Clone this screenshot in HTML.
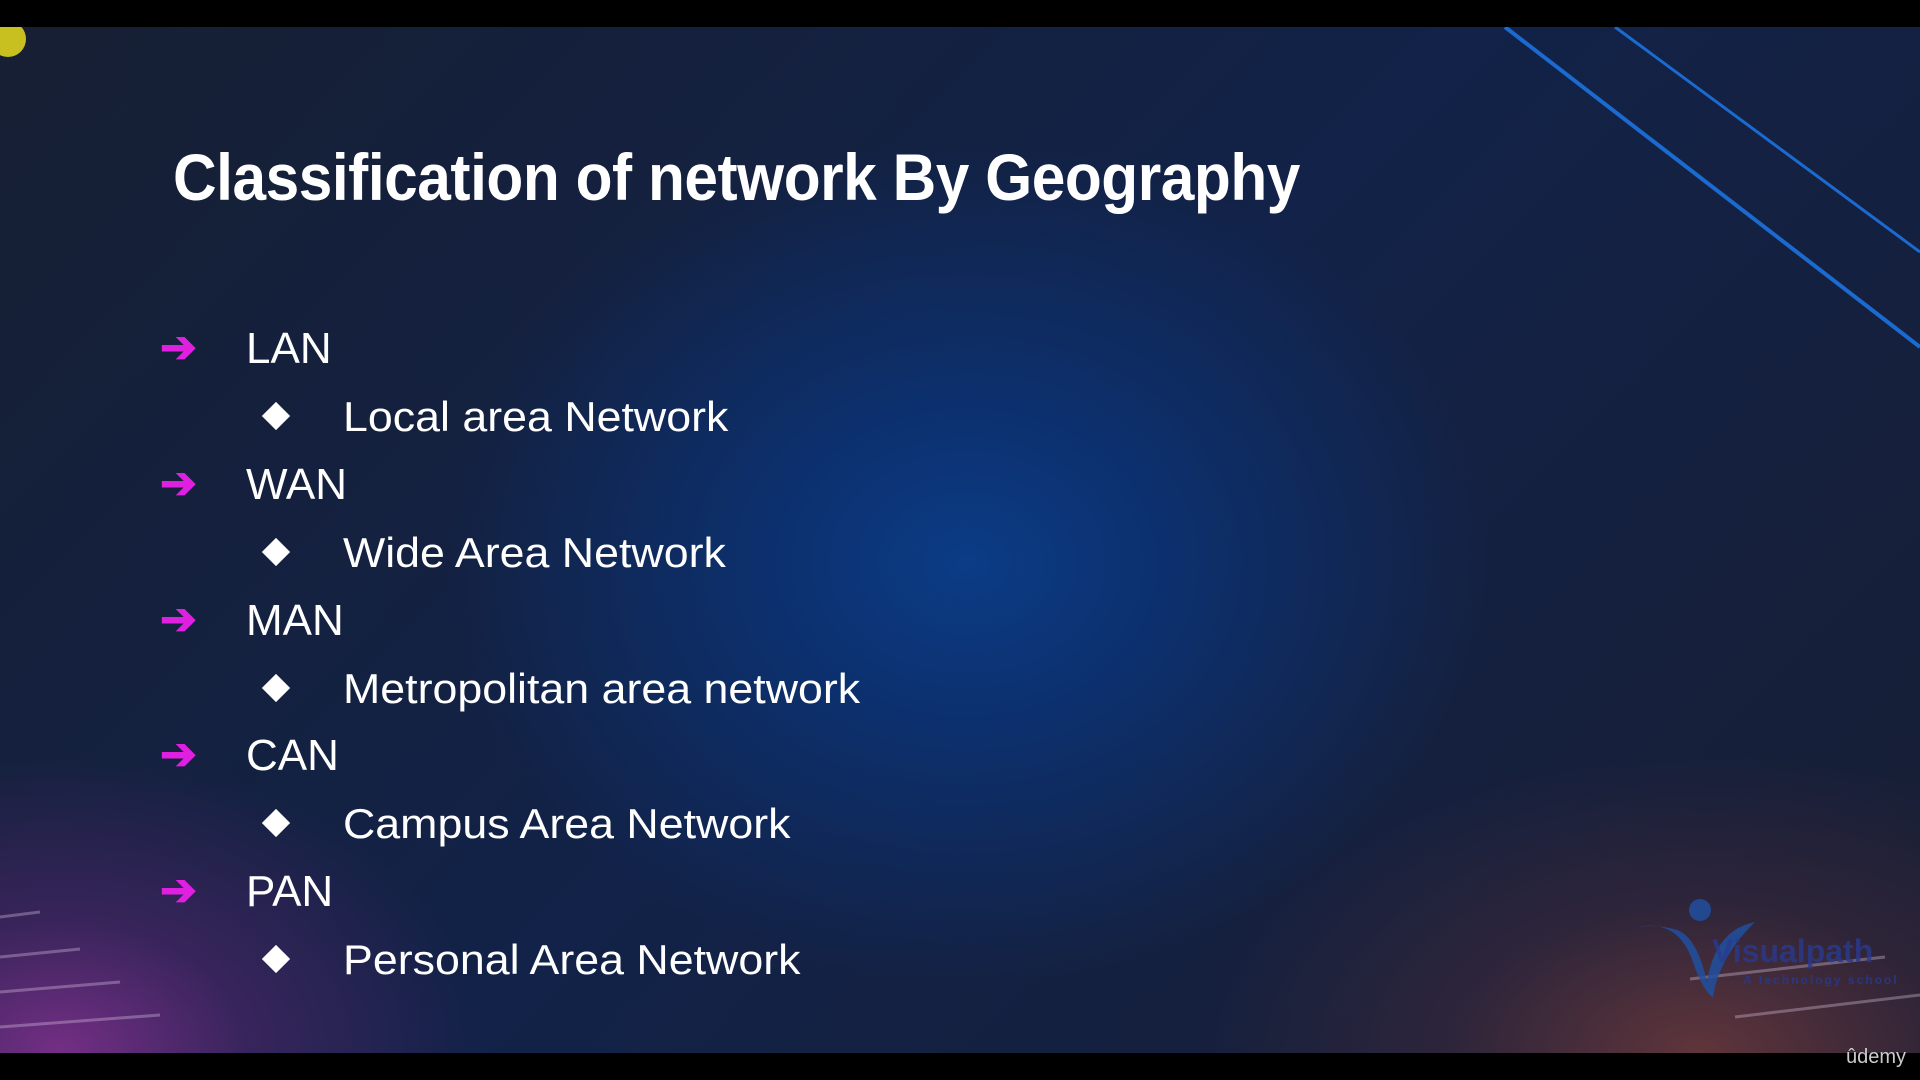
<!DOCTYPE html>
<html><head><meta charset="utf-8"><style>
html,body{margin:0;padding:0;width:1920px;height:1080px;overflow:hidden;background:#000;font-family:"Liberation Sans",sans-serif}
#s{position:absolute;left:0;top:27px;width:1920px;height:1026px;overflow:hidden;
background:
radial-gradient(ellipse 520px 420px at 967px 536px,#0b3c86 0%,#0c3170 35%,rgba(16,36,80,0) 100%),
radial-gradient(ellipse 420px 300px at 60px 1026px,rgba(140,50,150,.8) 0%,rgba(100,40,120,.45) 45%,rgba(40,30,80,0) 100%),
radial-gradient(ellipse 500px 300px at 1700px 1026px,rgba(120,60,60,.75) 0%,rgba(80,45,60,.4) 50%,rgba(30,30,60,0) 100%),
linear-gradient(135deg,#161f33 0%,#122248 50%,#181e33 100%);}
.t{position:absolute;left:173px;top:112px;font-size:66px;font-weight:bold;color:#fff;white-space:nowrap;transform-origin:0 0;transform:scaleX(.915);letter-spacing:-.5px}
.a{position:absolute;left:160px;color:#e020e0;font-size:44px;font-weight:bold;line-height:1}
.m{position:absolute;left:246px;color:#fff;font-size:44px;line-height:1}
.d{position:absolute;left:266px;width:20px;height:20px;background:#fff;transform:rotate(45deg)}
.s{position:absolute;left:343px;color:#fff;font-size:42px;line-height:1;white-space:nowrap;transform-origin:0 0;transform:scaleX(1.065)}
</style></head><body>
<div id="s">
<svg width="1920" height="1026" style="position:absolute;left:0;top:0">
<line x1="1505" y1="0" x2="1920" y2="320" stroke="#1a6ad0" stroke-width="4"/>
<line x1="1615" y1="0" x2="1920" y2="225" stroke="#1a6ad0" stroke-width="3"/>
<circle cx="8" cy="12" r="18" fill="#c8c020"/>
<g stroke="rgba(220,200,230,.35)" stroke-width="3">
<line x1="0" y1="890" x2="40" y2="885"/><line x1="0" y1="930" x2="80" y2="922"/>
<line x1="0" y1="965" x2="120" y2="955"/><line x1="0" y1="1000" x2="160" y2="988"/>
<line x1="1690" y1="952" x2="1885" y2="930"/><line x1="1735" y1="990" x2="1920" y2="968"/>
</g>
<path d="M1636 900 q40 -8 55 30 q12 35 22 40 q6 -40 42 -75 q-40 8 -48 60 q-10 -45 -30 -52 q-20 -6 -41 -3z" fill="#2050a0" opacity=".85"/>
<circle cx="1700" cy="883" r="11" fill="#2050a0" opacity=".85"/>
<text x="1712" y="935" font-family="Liberation Sans" font-weight="bold" font-size="32" fill="#283a90" opacity=".8">Visualpath</text>
<text x="1743" y="957" font-family="Liberation Sans" font-weight="bold" font-size="12" fill="#283a90" opacity=".8" letter-spacing="2">A technology school</text>
</svg>
<div class="t">Classification of network By Geography</div>
<div class="a" style="top:299px">➔</div><div class="m" style="top:300px">LAN</div>
<div class="d" style="top:379px"></div><div class="s" style="top:369px">Local area Network</div>
<div class="a" style="top:435px">➔</div><div class="m" style="top:436px">WAN</div>
<div class="d" style="top:515px"></div><div class="s" style="top:505px">Wide Area Network</div>
<div class="a" style="top:571px">➔</div><div class="m" style="top:572px">MAN</div>
<div class="d" style="top:651px"></div><div class="s" style="top:641px">Metropolitan area network</div>
<div class="a" style="top:706px">➔</div><div class="m" style="top:707px">CAN</div>
<div class="d" style="top:786px"></div><div class="s" style="top:776px">Campus Area Network</div>
<div class="a" style="top:842px">➔</div><div class="m" style="top:843px">PAN</div>
<div class="d" style="top:922px"></div><div class="s" style="top:912px">Personal Area Network</div>
</div>
<div style="position:absolute;right:14px;top:1046px;color:#ccc;font-size:20px">ûdemy</div>
</body></html>
